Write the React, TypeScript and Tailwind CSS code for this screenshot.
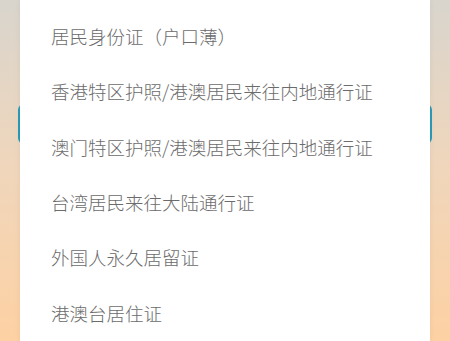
const OPTIONS = [
  '居民身份证（户口薄）',
  '香港特区护照/港澳居民来往内地通行证',
  '澳门特区护照/港澳居民来往内地通行证',
  '台湾居民来往大陆通行证',
  '外国人永久居留证',
  '港澳台居住证',
];

export default function App() {
  return (
    <div
      className="relative h-[341px] w-[450px] overflow-hidden bg-gradient-to-b from-[#d9d5cd] via-[#f0d6bb] to-[#fdd1a3]"
      style={{ fontFamily: '"Noto Sans CJK SC", "Noto Sans", sans-serif' }}
    >
      {/* 뒤쪽 페이지 */}
      <div className="px-[18px] pt-[104px]">
        <div className="h-[40px] rounded-md bg-[#2a9bb5]" />
      </div>

      {/* 선택 시트 */}
      <div className="absolute left-[20px] top-0 h-full w-[410px] bg-white shadow-[0_0_6px_rgba(0,0,0,0.06)]">
        <div className="flex flex-col pt-[9px]">
          {OPTIONS.map((label) => (
            <div
              key={label}
              className="flex h-[55.4px] items-center pl-[31px] text-[18.5px] font-light text-[#6b6b6b]"
            >
              {label}
            </div>
          ))}
        </div>
      </div>
    </div>
  );
}
